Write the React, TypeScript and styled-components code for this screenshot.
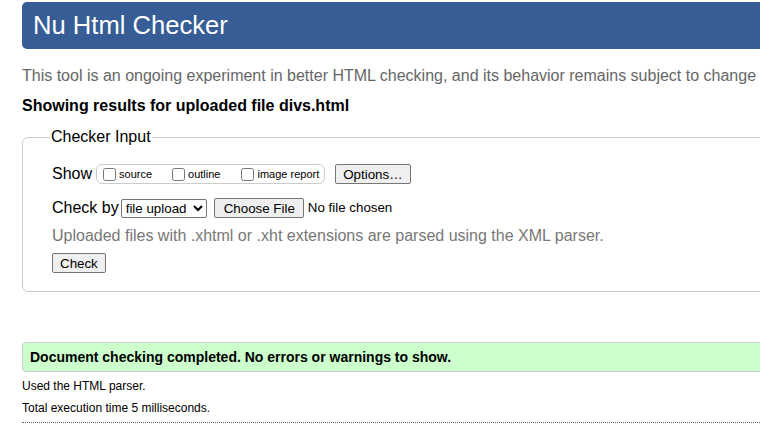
import React from "react";
import styled, { createGlobalStyle } from "styled-components";

const GlobalStyle = createGlobalStyle`
  html, body {
    margin: 0;
    padding: 0;
    background: #fff;
    overflow: hidden;
  }
  body {
    font-family: "Liberation Sans", Arial, sans-serif;
    color: #000;
  }
`;

const Page = styled.div`
  width: 1100px;
  padding: 2px 0 0 22px;
`;

const Header = styled.h1`
  margin: 0;
  height: 47px;
  background: #365d95;
  border-radius: 5px;
  color: #fff;
  font-size: 25.6px;
  font-weight: normal;
  line-height: 47px;
  padding-left: 11px;
`;

const Intro = styled.p`
  margin: 18px 0 0;
  font-size: 16px;
  line-height: 18px;
  color: #666;
`;

const Results = styled.p`
  margin: 12px 0 0;
  font-size: 16px;
  line-height: 18px;
  font-weight: bold;
`;

const Fieldset = styled.fieldset`
  margin: 13px 0 0;
  padding: 8px 0 18px 29px;
  border: 1px solid #ccc;
  border-radius: 6px;
`;

const Legend = styled.legend`
  margin-left: -2px;
  padding: 0 1px;
  font-size: 16px;
  line-height: 18px;
`;

const Row = styled.div<{ $gap?: number }>`
  display: flex;
  align-items: center;
  margin-top: ${(p) => p.$gap ?? 0}px;
  font-size: 16px;
  line-height: 18px;
`;

const Label = styled.span<{ $space: number }>`
  margin-right: ${(p) => p.$space}px;
`;

const Group = styled.span`
  display: inline-flex;
  align-items: center;
  height: 18px;
  padding: 0 5px 0 6px;
  border: 1px solid #ccc;
  border-radius: 6px;
  margin-right: 10px;
`;

const CheckLabel = styled.label<{ $gap: number }>`
  display: inline-flex;
  align-items: center;
  font-size: 11px;
  margin-right: ${(p) => p.$gap}px;

  input {
    width: 13px;
    height: 13px;
    margin: 0 3px 0 0;
  }
`;

const Button = styled.button`
  font-family: "Liberation Sans", Arial, sans-serif;
  font-size: 13.33px;
  height: 20px;
  padding: 0 7px;
  background: #efefef;
  border: 1px solid #767676;
  border-radius: 2px;
  color: #000;
`;

const FileButton = styled(Button)`
  padding: 0 8px 0 9px;
`;

const Select = styled.select`
  font-family: "Liberation Sans", Arial, sans-serif;
  font-size: 13.33px;
  height: 19px;
  width: 86px;
  padding: 0;
  margin-right: 7px;
  border: 1px solid #767676;
  border-radius: 2px;
  background: #fff;
  color: #000;
`;

const FileNote = styled.span`
  font-size: 13.33px;
  margin-left: 4px;
`;

const Hint = styled.div`
  margin-top: 9px;
  font-size: 16px;
  line-height: 18px;
  color: #777;
`;

const Success = styled.p`
  margin: 50px 0 0;
  height: 28px;
  line-height: 28px;
  padding-left: 7px;
  background: #ccffcc;
  border: 1px solid #ccc;
  border-radius: 4px;
  font-size: 14px;
  font-weight: bold;
`;

const Detail = styled.p<{ $gap: number }>`
  margin: ${(p) => p.$gap}px 0 0;
  font-size: 12px;
  line-height: 14px;
`;

const Divider = styled.hr`
  margin: 7px 0 0;
  border: 0;
  border-top: 1px dotted #666;
`;

export default function App() {
  return (
    <>
      <GlobalStyle />
      <Page>
        <Header>Nu Html Checker</Header>
        <Intro>
          This tool is an ongoing experiment in better HTML checking, and its
          behavior remains subject to change
        </Intro>
        <Results>Showing results for uploaded file divs.html</Results>
        <Fieldset>
          <Legend>Checker Input</Legend>
          <Row $gap={10}>
            <Label $space={4}>Show</Label>
            <Group>
              <CheckLabel $gap={20}>
                <input type="checkbox" />
                source
              </CheckLabel>
              <CheckLabel $gap={21}>
                <input type="checkbox" />
                outline
              </CheckLabel>
              <CheckLabel $gap={0}>
                <input type="checkbox" />
                image report
              </CheckLabel>
            </Group>
            <Button type="button">Options…</Button>
          </Row>
          <Row $gap={14}>
            <Label $space={2}>Check by</Label>
            <Select defaultValue="upload">
              <option value="upload">file upload</option>
              <option value="address">address</option>
              <option value="textarea">text input</option>
            </Select>
            <FileButton type="button">Choose File</FileButton>
            <FileNote>No file chosen</FileNote>
          </Row>
          <Hint>
            Uploaded files with .xhtml or .xht extensions are parsed using the
            XML parser.
          </Hint>
          <Row $gap={8}>
            <Button type="button">Check</Button>
          </Row>
        </Fieldset>
        <Success>
          Document checking completed. No errors or warnings to show.
        </Success>
        <Detail $gap={7}>Used the HTML parser.</Detail>
        <Detail $gap={8}>Total execution time 5 milliseconds.</Detail>
        <Divider />
      </Page>
    </>
  );
}
